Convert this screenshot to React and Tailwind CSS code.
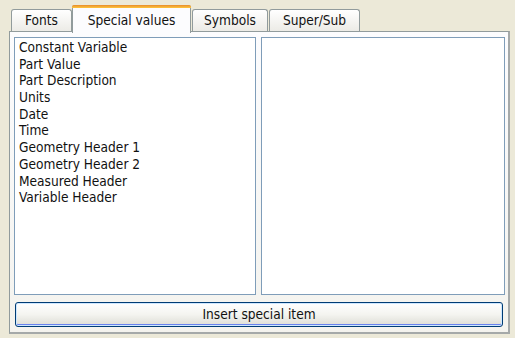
import React from 'react';

const items = [
    'Constant Variable',
    'Part Value',
    'Part Description',
    'Units',
    'Date',
    'Time',
    'Geometry Header 1',
    'Geometry Header 2',
    'Measured Header',
    'Variable Header',
];

const Tab = ({ label, className }) => (
    <div className={`h-[22px] flex items-center justify-center border border-b-0 border-[#919b9c] rounded-t-[3px] bg-gradient-to-b from-white to-[#ecebe6] ${className}`}>
        {label}
    </div>
);

const App = () => {
    return (
        <div className="w-[515px] h-[338px] bg-[#ece9d8] pt-[5px] pl-[9px] pr-[5px] pb-[4px] flex flex-col text-[13.6px] text-[#111] font-['DejaVu_Sans_Condensed','DejaVu_Sans',sans-serif]">
            {/* tab strip */}
            <div className="flex items-end h-[26px] pl-[2px] relative z-10">
                <Tab label="Fonts" className="w-[61px]" />
                <div className="w-[119px] h-[28px] -mb-[2px] flex flex-col bg-[#fcfcfe] border-x border-[#919b9c] rounded-t-[3px]">
                    <div className="h-[3px] bg-gradient-to-b from-[#e68b2c] to-[#ffc73c] rounded-t-[2px] -mx-[1px]"></div>
                    <div className="flex-1 flex items-center justify-center pb-[1px]">Special values</div>
                </div>
                <Tab label="Symbols" className="w-[76px] ml-[1px]" />
                <Tab label="Super/Sub" className="w-[91px] ml-[1px]" />
            </div>

            {/* panel */}
            <div className="flex-1 flex flex-col border border-[#919b9c] border-r-2 border-b-2 border-r-[#a5a9a9] border-b-[#a5a9a9] bg-gradient-to-b from-[#fcfcfe] to-[#f4f3ee] pl-[4px] pr-[3px] pt-[5px] pb-[5px]">
                <div className="flex-1 flex gap-[5px]">
                    <div className="w-[242px] bg-white border border-[#7f9db9] px-[4px] pt-[1px]">
                        {items.map((item) => (
                            <div key={item} className="h-[16.7px] leading-[16.7px] whitespace-nowrap">{item}</div>
                        ))}
                    </div>
                    <div className="flex-1 bg-white border border-[#7f9db9]"></div>
                </div>
                <button className="mt-[7px] ml-[1px] mr-[2px] h-[25px] border border-[#003c74] rounded-[3px] bg-gradient-to-b from-white via-[#f4f4f0] to-[#dcdcd4] shadow-[inset_0_0_0_1px_#cee7ff,inset_0_-2px_0_#6982ee] text-[13.6px]">
                    Insert special item
                </button>
            </div>
        </div>
    );
};

export default App;
